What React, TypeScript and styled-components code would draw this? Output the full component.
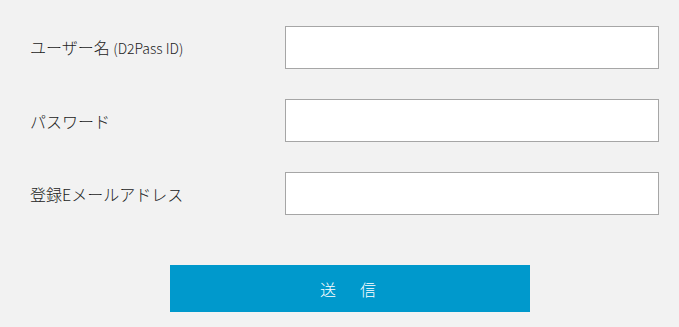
import { createGlobalStyle } from "styled-components";
import styled from "styled-components";

const GlobalStyle = createGlobalStyle`
	html, body {
		margin: 0;
		padding: 0;
		background: #f2f2f2;
	}
	body {
		font-family: "Noto Sans CJK JP", "Noto Sans", sans-serif;
		color: #333333;
	}
`;

// === estilos ===
const Page = styled.div`
	padding: 26px 0 0 30px;
`;

const Form = styled.form`
	display: flex;
	flex-direction: column;
`;

const Fields = styled.div`
	display: grid;
	grid-template-columns: 255px 374px;
	row-gap: 30px;
	align-items: center;
`;

const Label = styled.label`
	font-size: 16px;
	font-weight: 300;
	line-height: 20px;
	color: #222222;
	white-space: nowrap;
`;

const Note = styled.span`
	font-size: 14px;
`;

const Input = styled.input`
	box-sizing: border-box;
	width: 374px;
	height: 43px;
	margin: 0;
	padding: 0 10px;
	border: 1px solid #a6a6a6;
	background: #ffffff;
	font-family: inherit;
	font-size: 16px;
	outline: none;
`;

const SubmitButton = styled.button`
	box-sizing: border-box;
	width: 360px;
	height: 47px;
	margin: 50px 0 0 140px;
	padding: 0;
	border: none;
	background-color: #0099cc;
	color: #ffffff;
	font-family: inherit;
	font-size: 16px;
	font-weight: 300;
	letter-spacing: 4px;
	box-shadow: 3px 5px 0 -3px #a9c6d4;
	cursor: pointer;
`;

export default function App() {
	return (
		<>
			<GlobalStyle />
			<Page>
				<Form onSubmit={(e) => e.preventDefault()}>
					<Fields>
						<Label htmlFor="user">
							ユーザー名 <Note>(D2Pass ID)</Note>
						</Label>
						<Input id="user" type="text" />

						<Label htmlFor="pass">パスワード</Label>
						<Input id="pass" type="password" />

						<Label htmlFor="mail">登録Eメールアドレス</Label>
						<Input id="mail" type="email" />
					</Fields>
					<SubmitButton type="submit">送　信</SubmitButton>
				</Form>
			</Page>
		</>
	);
}
